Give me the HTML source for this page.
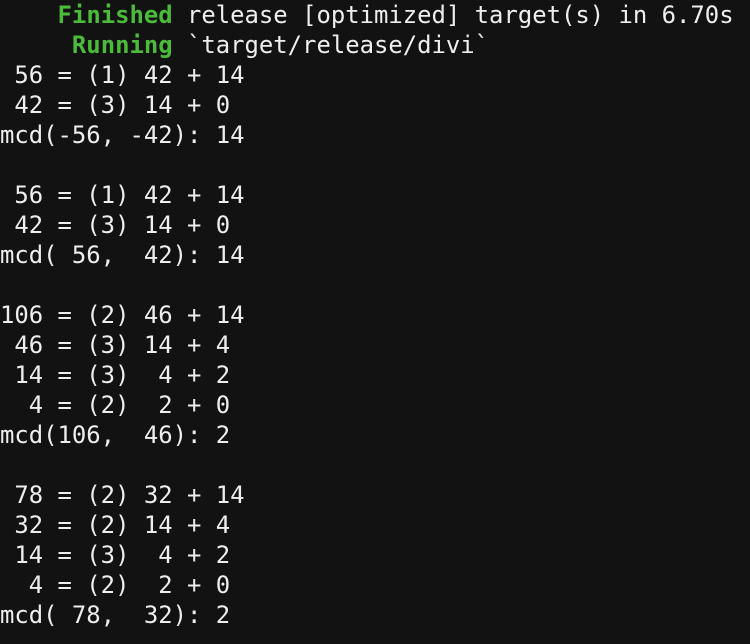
<!DOCTYPE html>
<html><head><style>
html,body{margin:0;padding:0;background:#121212;width:750px;height:644px;overflow:hidden}
pre{margin:0;padding:0;font-family:"DejaVu Sans Mono","Liberation Mono",monospace;font-size:23.9px;line-height:30px;color:#eeeeee;white-space:pre}
b{color:#4cba3a;font-weight:bold}
</style></head><body><pre>    <b>Finished</b> release [optimized] target(s) in 6.70s
     <b>Running</b> `target/release/divi`
 56 = (1) 42 + 14
 42 = (3) 14 + 0
mcd(-56, -42): 14

 56 = (1) 42 + 14
 42 = (3) 14 + 0
mcd( 56,  42): 14

106 = (2) 46 + 14
 46 = (3) 14 + 4
 14 = (3)  4 + 2
  4 = (2)  2 + 0
mcd(106,  46): 2

 78 = (2) 32 + 14
 32 = (2) 14 + 4
 14 = (3)  4 + 2
  4 = (2)  2 + 0
mcd( 78,  32): 2
</pre></body></html>
